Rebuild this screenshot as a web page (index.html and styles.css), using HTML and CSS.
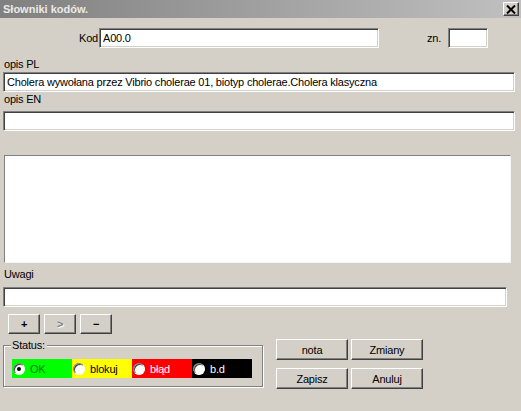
FILE: index.html
```html
<!DOCTYPE html>
<html lang="pl">

<head>
    <meta charset="UTF-8">
    <meta name="viewport" content="width=device-width, initial-scale=1.0">
    <title>Słowniki kodów.</title>
    <link rel="stylesheet" href="styles.css">
</head>

<body>
    <div class="window">
        <div class="titlebar">
            <span class="title">Słowniki kodów.</span>
            <button class="close-btn">
                <svg width="10" height="9" viewBox="0 0 10 9">
                    <path d="M1 0.5 L9 8.5 M9 0.5 L1 8.5" stroke="#000" stroke-width="2" />
                </svg>
            </button>
        </div>

        <div class="form">
            <div class="row-kod">
                <span class="kod-label">Kod</span>
                <div class="field kod-field">A00.0</div>
                <span class="zn-label">zn.</span>
                <div class="field zn-field"></div>
            </div>

            <div class="label label-pl">opis PL</div>
            <div class="field wide">Cholera wywołana przez Vibrio cholerae 01, biotyp cholerae.Cholera klasyczna</div>

            <div class="label label-en">opis EN</div>
            <div class="field wide"></div>

            <div class="memo"></div>

            <div class="label label-uwagi">Uwagi</div>
            <div class="field uwagi-field"></div>

            <div class="nav-buttons">
                <button class="btn small">+</button>
                <button class="btn small disabled">&gt;</button>
                <button class="btn small">&minus;</button>
            </div>

            <div class="bottom">
                <div class="group">
                    <span class="legend">Status:</span>
                    <div class="status-strip">
                        <div class="status ok"><span class="radio checked"></span>OK</div>
                        <div class="status blokuj"><span class="radio"></span>blokuj</div>
                        <div class="status blad"><span class="radio"></span>błąd</div>
                        <div class="status bd"><span class="radio"></span>b.d</div>
                    </div>
                </div>

                <div class="actions">
                    <button class="btn action">nota</button>
                    <button class="btn action">Zmiany</button>
                    <button class="btn action">Zapisz</button>
                    <button class="btn action">Anuluj</button>
                </div>
            </div>
        </div>
    </div>
</body>

</html>
```

FILE: styles.css
```css
body {
    margin: 0;
    background-color: #d4d0c8;
    font-family: "Liberation Sans", Arial, sans-serif;
    font-size: 11px;
    letter-spacing: -0.2px;
    color: #000;
}

.window {
    width: 521px;
    height: 411px;
    overflow: hidden;
}

.titlebar {
    height: 18px;
    display: flex;
    align-items: center;
    justify-content: space-between;
    background: linear-gradient(to right, #808080, #c0c0c0);
}

.title {
    padding-left: 3px;
    font-weight: bold;
    letter-spacing: 0;
    color: #eceae6;
}

.close-btn {
    width: 16px;
    height: 14px;
    margin-right: 2px;
    padding: 0;
    display: flex;
    align-items: center;
    justify-content: center;
    background-color: #d4d0c8;
    border: 1px solid;
    border-color: #fff #404040 #404040 #fff;
    box-shadow: inset -1px -1px #808080;
}

.form {
    padding: 0 3px;
}

.row-kod {
    display: flex;
    align-items: center;
    height: 20px;
    margin-top: 10px;
}

.kod-label {
    margin-left: 76px;
    width: 20px;
}

.field {
    box-sizing: border-box;
    height: 20px;
    padding: 2px 3px 0;
    line-height: 15px;
    background-color: #fff;
    border: 1px solid;
    border-color: #808080 #fff #fff #808080;
    box-shadow: inset 1px 1px #404040, inset -1px -1px #d4d0c8;
    white-space: nowrap;
    overflow: hidden;
}

.kod-field {
    width: 280px;
}

.zn-label {
    margin-left: 48px;
    width: 21px;
}

.zn-field {
    width: 40px;
}

.wide {
    width: 512px;
}

.label {
    line-height: 15px;
}

.label-pl {
    margin-top: 9px;
    padding-left: 1px;
}

.label-en {
    height: 19px;
    padding-left: 1px;
}

.memo {
    box-sizing: border-box;
    width: 507px;
    height: 108px;
    margin: 24px 0 0 1px;
    background-color: #fff;
    border: 1px solid;
    border-color: #808080 #f4f4f4 #f4f4f4 #808080;
}

.label-uwagi {
    height: 20px;
    padding: 4px 0 0 1px;
}

.uwagi-field {
    width: 504px;
}

.nav-buttons {
    display: flex;
    gap: 4px;
    margin: 7px 0 0 5px;
}

.btn {
    box-sizing: border-box;
    padding: 0;
    font-family: "Liberation Sans", Arial, sans-serif;
    font-size: 11px;
    letter-spacing: -0.2px;
    color: #000;
    background-color: #d4d0c8;
    border: 1px solid;
    border-color: #fff #404040 #404040 #fff;
    box-shadow: inset -1px -1px #808080;
}

.small {
    width: 32px;
    height: 20px;
    font-weight: bold;
}

.disabled {
    color: #808080;
    text-shadow: 1px 1px #fff;
}

.bottom {
    display: flex;
    margin-top: 4px;
}

.group {
    position: relative;
    box-sizing: border-box;
    width: 260px;
    height: 42px;
    margin-top: 7px;
    border: 1px solid #808080;
    box-shadow: inset 1px 1px #fff, 1px 1px #fff;
}

.legend {
    position: absolute;
    top: -8px;
    left: 7px;
    padding: 0 2px 0 1px;
    background-color: #d4d0c8;
    line-height: 14px;
}

.status-strip {
    display: flex;
    margin: 13px 0 0 8px;
}

.status {
    width: 60px;
    height: 19px;
    display: flex;
    align-items: center;
    box-sizing: border-box;
    padding-left: 1px;
}

.radio {
    box-sizing: border-box;
    width: 12px;
    height: 12px;
    margin-right: 5px;
    border-radius: 50%;
    background-color: #fff;
    border: 1px solid;
    border-color: #808080 #fff #fff #808080;
    box-shadow: inset 1px 1px #404040;
    display: flex;
    align-items: center;
    justify-content: center;
}

.radio.checked::after {
    content: "";
    width: 4px;
    height: 4px;
    border-radius: 50%;
    background-color: #000;
}

.ok {
    background-color: #00ff00;
    color: #008000;
}

.blokuj {
    background-color: #ffff00;
}

.blad {
    background-color: #ff0000;
    color: #fff;
}

.bd {
    background-color: #000;
    color: #fff;
}

.actions {
    display: grid;
    grid-template-columns: repeat(2, 72px);
    column-gap: 3px;
    row-gap: 8px;
    margin: 1px 0 0 13px;
    align-content: start;
}

.action {
    height: 21px;
}
```
